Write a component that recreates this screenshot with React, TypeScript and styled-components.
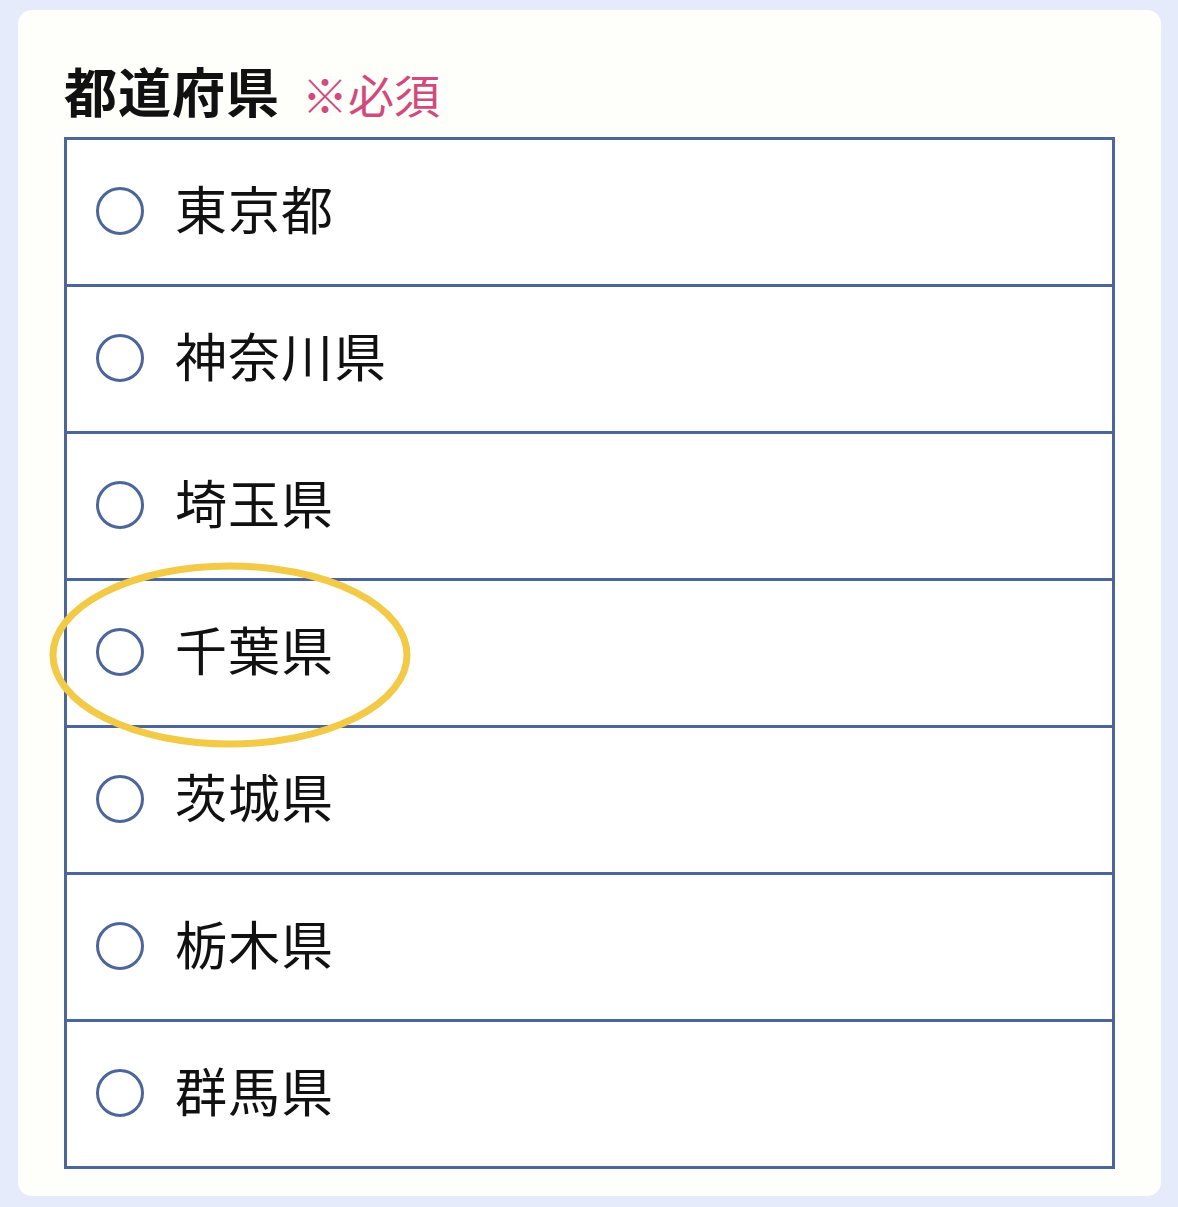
import styled, { createGlobalStyle } from 'styled-components'

const GlobalStyle = createGlobalStyle`
	body {
		margin: 0;
		background: #e6ebfb;
		font-family: 'Noto Sans CJK JP', 'Noto Sans', sans-serif;
	}
`

const Page = styled.div`
	padding: 10px 17px 12px 18px;
`

const Card = styled.div`
	background: #fefefa;
	border-radius: 14px;
	padding: 50px 46px 27px 46px;
`

const Title = styled.div`
	display: flex;
	align-items: baseline;
	gap: 22px;
	height: 77px;
	line-height: 60px;
`

const TitleMain = styled.span`
	font-size: 53px;
	font-weight: 700;
	color: #111111;
	letter-spacing: 1px;
`

const Required = styled.span`
	font-size: 46px;
	font-weight: 400;
	color: #d24a7c;
`

const List = styled.div`
	position: relative;
	border: 3px solid #4d6699;
	background: #ffffff;
`

const Row = styled.label`
	display: flex;
	align-items: center;
	gap: 31px;
	height: 147px;
	padding-left: 29px;
	padding-bottom: 9px;
	box-sizing: border-box;
	border-top: 3px solid #4d6699;

	&:first-child {
		border-top: none;
		height: 144px;
	}
`

const Radio = styled.span`
	width: 42px;
	height: 42px;
	margin-top: 6px;
	border: 3px solid #4d6699;
	border-radius: 50%;
	flex-shrink: 0;
`

const Label = styled.span`
	font-size: 52px;
	font-weight: 400;
	color: #111111;
	letter-spacing: 1px;
`

const Highlight = styled.svg`
	position: absolute;
	left: -20px;
	top: 421px;
	pointer-events: none;
`

const prefectures = ['東京都', '神奈川県', '埼玉県', '千葉県', '茨城県', '栃木県', '群馬県']

export default function App() {
	return (
		<>
			<GlobalStyle />
			<Page>
				<Card>
					<Title>
						<TitleMain>都道府県</TitleMain>
						<Required>※必須</Required>
					</Title>
					<List>
						{prefectures.map(name => (
							<Row key={name}>
								<Radio />
								<Label>{name}</Label>
							</Row>
						))}
						<Highlight width="366" height="190" viewBox="0 0 366 190">
							<ellipse cx="183" cy="94" rx="177" ry="89" fill="none" stroke="#f2ca47" strokeWidth="7" />
						</Highlight>
					</List>
				</Card>
			</Page>
		</>
	)
}
